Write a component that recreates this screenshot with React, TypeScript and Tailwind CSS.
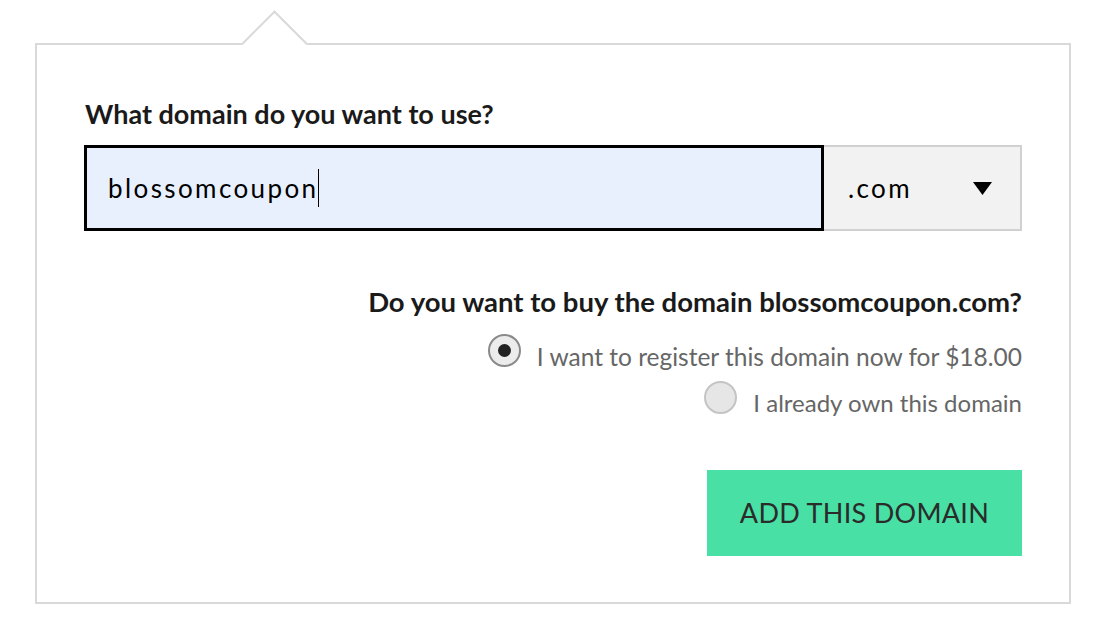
import React, { useState } from 'react';

export default function App() {
  const [domain] = useState('blossomcoupon');
  const [tld, setTld] = useState('.com');
  const [choice, setChoice] = useState<'register' | 'own'>('register');

  const radio = (active: boolean) =>
    `shrink-0 flex items-center justify-center w-[33px] h-[33px] rounded-full border-2 ${
      active ? 'border-[#8a8a8a] bg-[#ececec]' : 'border-[#c4c4c4] bg-[#e6e6e6]'
    }`;

  return (
    <div className="min-h-screen bg-white font-['Lato','Liberation_Sans',sans-serif]">
      <div className="pl-[35px] pt-[43px]">
        <div className="relative w-[1036px] h-[561px] border-2 border-[#d9d9d9] bg-white pl-[48px] pr-[47px] pt-[53px]">
          <div className="absolute left-[214px] top-[-25px] w-[47px] h-[47px] rotate-45 bg-white border-t-2 border-l-2 border-[#d9d9d9]" />

          <label className="relative block text-[27px] font-bold text-[#1a1a1a] leading-[32px]">
            What domain do you want to use?
          </label>

          <div className="mt-[15px] -ml-px flex h-[86px]">
            <div className="flex-1 flex items-center border-[3px] border-black bg-[#e8f0fe] pl-[21px]">
              <span className="text-[26px] tracking-[2.4px] text-black">{domain}</span>
              <span className="ml-[-1px] w-px h-[38px] bg-black" />
            </div>
            <div className="relative w-[198px] flex items-center border-2 border-l-0 border-[#d0d0d0] bg-[#f2f2f2] pl-[24px] pr-[28px]">
              <span className="text-[26px] tracking-[2.4px] text-black">{tld}</span>
              <svg className="ml-auto" width="19" height="13" viewBox="0 0 19 13">
                <path d="M0 0H19L9.5 13Z" fill="#000" />
              </svg>
              <select
                value={tld}
                onChange={(e) => setTld(e.target.value)}
                className="absolute inset-0 opacity-0 cursor-pointer"
              >
                <option>.com</option>
                <option>.net</option>
                <option>.org</option>
              </select>
            </div>
          </div>

          <div className="mt-[55px] flex flex-col items-end">
            <p className="text-[27.5px] font-bold text-[#1a1a1a] leading-[32px]">
              Do you want to buy the domain {domain}
              {tld}?
            </p>

            <label className="mt-[16px] flex items-start gap-[16px] cursor-pointer" onClick={() => setChoice('register')}>
              <span className={radio(choice === 'register')}>
                {choice === 'register' && <span className="w-[13px] h-[13px] rounded-full bg-[#222]" />}
              </span>
              <span className="mt-[8px] text-[24.5px] text-[#666] leading-[30px]">
                I want to register this domain now for $18.00
              </span>
            </label>

            <label className="mt-[9px] flex items-start gap-[16px] cursor-pointer" onClick={() => setChoice('own')}>
              <span className={radio(choice === 'own')}>
                {choice === 'own' && <span className="w-[13px] h-[13px] rounded-full bg-[#222]" />}
              </span>
              <span className="mt-[7px] text-[24px] text-[#666] leading-[30px]">I already own this domain</span>
            </label>

            <button className="mt-[52px] w-[315px] h-[86px] bg-[#48e0a4] text-[27px] text-[#2b2b2b] tracking-[0.3px]">
              ADD THIS DOMAIN
            </button>
          </div>
        </div>
      </div>
    </div>
  );
}
